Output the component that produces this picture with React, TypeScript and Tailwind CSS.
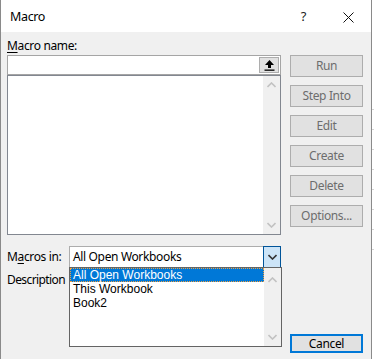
import React from "react";

const font = { fontFamily: '"Noto Sans", "Liberation Sans", sans-serif', letterSpacing: "-0.35px" };
const listFont = { fontFamily: '"Liberation Sans", Arial, sans-serif', letterSpacing: "0px" };

function Btn({ label, disabled = true }: { label: string; disabled?: boolean }) {
  return (
    <div
      className={
        "w-[73px] h-[22px] flex items-center justify-center bg-[#e1e1e1] border border-[#adadad] text-[12px] " +
        (disabled ? "text-[#6d6d6d]" : "text-black")
      }
    >
      {label}
    </div>
  );
}

function ChevronUp({ color = "#c2c2c2" }: { color?: string }) {
  return (
    <svg width="9" height="6" viewBox="0 0 9 6">
      <path d="M0.5 5 L4.5 1 L8.5 5" fill="none" stroke={color} strokeWidth="1.6" />
    </svg>
  );
}
function ChevronDown({ color = "#c2c2c2" }: { color?: string }) {
  return (
    <svg width="9" height="6" viewBox="0 0 9 6">
      <path d="M0.5 1 L4.5 5 L8.5 1" fill="none" stroke={color} strokeWidth="1.6" />
    </svg>
  );
}

export default function App() {
  return (
    <div className="w-[374px] h-[359px] flex bg-white overflow-hidden text-[12px] text-black" style={font}>
      <div className="w-[372px] h-[359px] flex flex-col border-l border-r border-[#8a8a8a] relative">
        {/* title bar */}
        <div className="h-[32px] bg-white flex items-center pl-[9px] pt-[2px] shrink-0">
          <span className="text-[12.5px] text-black">Macro</span>
          <span className="ml-auto mr-[37px] text-[13px] text-[#222]">?</span>
          <svg width="11" height="11" viewBox="0 0 11 11" className="mr-[17px]">
            <path d="M0.5 0.5 L10.5 10.5 M10.5 0.5 L0.5 10.5" stroke="#111" strokeWidth="1" />
          </svg>
        </div>
        {/* body */}
        <div className="flex-1 bg-[#f0f0f0] flex pt-[6px] pl-[6px]">
          {/* left column */}
          <div className="w-[274px] flex flex-col">
            <div className="h-[17px] leading-[16px]">
              <span className="underline underline-offset-2">M</span>acro name:
            </div>
            <div className="h-[20px] bg-white border border-[#a5a5a5] flex items-stretch justify-end p-[1px]">
              <div className="w-[20px] bg-[#e1e1e1] border border-[#adadad] flex items-center justify-center">
                <svg width="11" height="12" viewBox="0 0 11 12">
                  <path d="M5.5 1 L10 6 L7 6 L7 9 L4 9 L4 6 L1 6 Z" fill="#000" />
                  <rect x="0.5" y="10.5" width="10" height="1.3" fill="#000" />
                </svg>
              </div>
            </div>
            <div className="h-[160px] bg-white border border-[#828790] flex justify-end">
              <div className="w-[17px] bg-[#f0f0f0] flex flex-col items-center justify-between py-[6px]">
                <ChevronUp />
                <ChevronDown />
              </div>
            </div>
            <div className="mt-[11px] flex items-center h-[22px]">
              <div className="w-[62px]">
                M<span className="underline underline-offset-2">a</span>cros in:
              </div>
              <div className="w-[212px] h-[22px] bg-white border border-[#adadad] flex items-stretch">
                <div className="flex-1 pl-[3px] flex items-center">All Open Workbooks</div>
                <div className="w-[18px] -my-[1px] -mr-[1px] bg-[#cce4f7] border border-[#005499] flex items-center justify-center">
                  <ChevronDown color="#333" />
                </div>
              </div>
            </div>
            <div className="mt-[4px] h-[16px] leading-[16px] w-[62px] overflow-hidden whitespace-nowrap tracking-[-0.6px]">Description</div>
          </div>
          {/* right column */}
          <div className="ml-[9px] flex flex-col gap-[8px] pt-[17px]">
            <Btn label="Run" />
            <Btn label="Step Into" />
            <Btn label="Edit" />
            <Btn label="Create" />
            <Btn label="Delete" />
            <Btn label="Options..." />
            <div className="mt-[99px] w-[73px] h-[19px] flex items-center justify-center bg-[#e1e1e1] border-2 border-[#0078d7] text-black">
              Cancel
            </div>
          </div>
        </div>
        {/* dropdown overlay */}
        <div className="absolute left-[68px] top-[267px] w-[213px] h-[80px] bg-white border border-[#646464] flex" style={listFont}>
          <div className="flex-1 flex flex-col">
            <div className="h-[14px] leading-[14px] bg-[#0078d7] text-white pl-[3px] outline outline-1 outline-dotted outline-[#f0a040] -outline-offset-1">
              All Open Workbooks
            </div>
            <div className="h-[14px] leading-[14px] pl-[3px]">This Workbook</div>
            <div className="h-[14px] leading-[14px] pl-[3px]">Book2</div>
          </div>
          <div className="w-[17px] bg-[#f0f0f0] flex flex-col items-center justify-between pt-[9px] pb-[6px]">
            <ChevronUp />
            <ChevronDown />
          </div>
        </div>
      </div>
      <div className="w-[2px] h-[359px] bg-white flex flex-col">
        <div className="h-[110px] border-b border-[#d4d4d4]" />
        <div className="h-[20px] border-b border-[#d4d4d4]" />
        <div className="h-[20px] border-b border-[#d4d4d4]" />
        <div className="h-[20px] border-b border-[#d4d4d4]" />
        <div className="h-[20px] border-b border-[#d4d4d4]" />
        <div className="h-[20px] border-b border-[#d4d4d4]" />
        <div className="h-[20px] border-b border-[#d4d4d4]" />
        <div className="h-[20px] border-b border-[#d4d4d4]" />
      </div>
    </div>
  );
}
